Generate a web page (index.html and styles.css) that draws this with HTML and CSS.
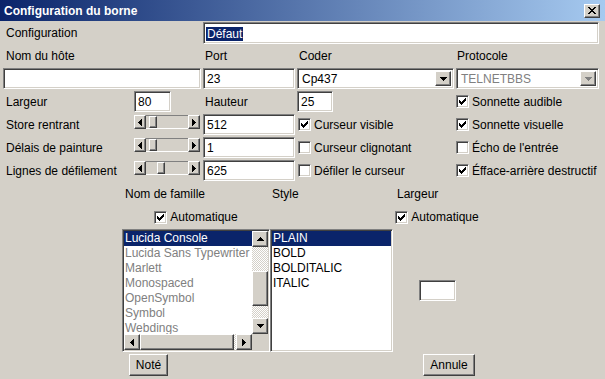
FILE: index.html
```html
<!DOCTYPE html>
<html lang="fr">
<head>
<meta charset="utf-8">
<title>Configuration du borne</title>
<link rel="stylesheet" href="styles.css">
</head>
<body>
<div class="window">
  <div class="titlebar">
    <span class="title">Configuration du borne</span>
    <span class="close raised"><svg width="8" height="7" viewBox="0 0 8 7" shape-rendering="crispEdges"><path d="M0 0h2v1h1v1h2v-1h1v-1h2v1h-1v1h-1v1h-1v1h1v1h1v1h1v1h-2v-1h-1v-1h-2v1h-1v1h-2v-1h1v-1h1v-1h1v-1h-1v-1h-1v-1h-1z"/></svg></span>
  </div>

  <div class="form">
    <div class="lbl c1">Configuration</div>
    <div class="field sunken c35"><span class="hl">Défaut</span></div>

    <div class="lbl c1">Nom du hôte</div>
    <div class="lbl c3">Port</div>
    <div class="lbl c4">Coder</div>
    <div class="lbl c5">Protocole</div>

    <div class="field sunken c12"></div>
    <div class="field sunken c3">23</div>
    <div class="combo sunken c4"><span class="ctext">Cp437</span><span class="cbtn raised"><svg width="7" height="4" viewBox="0 0 7 4" shape-rendering="crispEdges"><path d="M0 0h7v1h-1v1h-1v1h-1v1h-1v-1h-1v-1h-1v-1h-1z"/></svg></span></div>
    <div class="combo sunken c5 disabled"><span class="ctext">TELNETBBS</span><span class="cbtn raised"><svg width="7" height="4" viewBox="0 0 7 4" shape-rendering="crispEdges"><path d="M0 0h7v1h-1v1h-1v1h-1v1h-1v-1h-1v-1h-1v-1h-1z"/></svg></span></div>

    <div class="lbl c1">Largeur</div>
    <div class="field sunken c2 small">80</div>
    <div class="lbl c3">Hauteur</div>
    <div class="field sunken c4 small">25</div>
    <label class="chk c5"><span class="box sunken"><svg width="7" height="7" viewBox="0 0 7 7" shape-rendering="crispEdges"><path d="M6 0h1v3h-1v1h-1v1h-1v1h-1v1h-1v-1h-1v-1h-1v-3h1v1h1v1h1v-1h1v-1h1v-1h1z"/></svg></span>Sonnette audible</label>

    <div class="lbl c1">Store rentrant</div>
    <div class="slider c2"><span class="sbtn raised"><svg width="4" height="7" viewBox="0 0 4 7" shape-rendering="crispEdges"><path d="M3 0h1v7h-1v-1h-1v-1h-1v-1h-1v-1h1v-1h1v-1h1z"/></svg></span><span class="trough"><span class="thumb raised" style="margin-left:3px"></span></span><span class="sbtn raised"><svg width="4" height="7" viewBox="0 0 4 7" shape-rendering="crispEdges"><path d="M0 0h1v1h1v1h1v1h1v1h-1v1h-1v1h-1v1h-1z"/></svg></span></div>
    <div class="field sunken c3">512</div>
    <label class="chk c4"><span class="box sunken"><svg width="7" height="7" viewBox="0 0 7 7" shape-rendering="crispEdges"><path d="M6 0h1v3h-1v1h-1v1h-1v1h-1v1h-1v-1h-1v-1h-1v-3h1v1h1v1h1v-1h1v-1h1v-1h1z"/></svg></span>Curseur visible</label>
    <label class="chk c5"><span class="box sunken"><svg width="7" height="7" viewBox="0 0 7 7" shape-rendering="crispEdges"><path d="M6 0h1v3h-1v1h-1v1h-1v1h-1v1h-1v-1h-1v-1h-1v-3h1v1h1v1h1v-1h1v-1h1v-1h1z"/></svg></span>Sonnette visuelle</label>

    <div class="lbl c1">Délais de painture</div>
    <div class="slider c2"><span class="sbtn raised"><svg width="4" height="7" viewBox="0 0 4 7" shape-rendering="crispEdges"><path d="M3 0h1v7h-1v-1h-1v-1h-1v-1h-1v-1h1v-1h1v-1h1z"/></svg></span><span class="trough"><span class="thumb raised" style="margin-left:3px"></span></span><span class="sbtn raised"><svg width="4" height="7" viewBox="0 0 4 7" shape-rendering="crispEdges"><path d="M0 0h1v1h1v1h1v1h1v1h-1v1h-1v1h-1v1h-1z"/></svg></span></div>
    <div class="field sunken c3">1</div>
    <label class="chk c4"><span class="box sunken"></span>Curseur clignotant</label>
    <label class="chk c5"><span class="box sunken"></span>Écho de l'entrée</label>

    <div class="lbl c1">Lignes de défilement</div>
    <div class="slider c2"><span class="sbtn raised"><svg width="4" height="7" viewBox="0 0 4 7" shape-rendering="crispEdges"><path d="M3 0h1v7h-1v-1h-1v-1h-1v-1h-1v-1h1v-1h1v-1h1z"/></svg></span><span class="trough"><span class="thumb raised" style="margin-left:11px"></span></span><span class="sbtn raised"><svg width="4" height="7" viewBox="0 0 4 7" shape-rendering="crispEdges"><path d="M0 0h1v1h1v1h1v1h1v1h-1v1h-1v1h-1v1h-1z"/></svg></span></div>
    <div class="field sunken c3">625</div>
    <label class="chk c4"><span class="box sunken"></span>Défiler le curseur</label>
    <label class="chk c5"><span class="box sunken"><svg width="7" height="7" viewBox="0 0 7 7" shape-rendering="crispEdges"><path d="M6 0h1v3h-1v1h-1v1h-1v1h-1v1h-1v-1h-1v-1h-1v-3h1v1h1v1h1v-1h1v-1h1v-1h1z"/></svg></span>Éfface-arrière destructif</label>
  </div>

  <div class="lower">
    <div class="lbl">Nom de famille</div>
    <div class="lbl lbl-style">Style</div>
    <div class="lbl lbl-larg">Largeur</div>

    <label class="chk center"><span class="box sunken"><svg width="7" height="7" viewBox="0 0 7 7" shape-rendering="crispEdges"><path d="M6 0h1v3h-1v1h-1v1h-1v1h-1v1h-1v-1h-1v-1h-1v-3h1v1h1v1h1v-1h1v-1h1v-1h1z"/></svg></span>Automatique</label>
    <div></div>
    <label class="chk center"><span class="box sunken"><svg width="7" height="7" viewBox="0 0 7 7" shape-rendering="crispEdges"><path d="M6 0h1v3h-1v1h-1v1h-1v1h-1v1h-1v-1h-1v-1h-1v-3h1v1h1v1h1v-1h1v-1h1v-1h1z"/></svg></span>Automatique</label>

    <div class="listbox fonts sunken">
      <div class="items">
        <div class="it sel">Lucida Console</div>
        <div class="it dis">Lucida Sans Typewriter</div>
        <div class="it dis">Marlett</div>
        <div class="it dis">Monospaced</div>
        <div class="it dis">OpenSymbol</div>
        <div class="it dis">Symbol</div>
        <div class="it dis">Webdings</div>
      </div>
      <div class="vscroll">
        <span class="sbtn raised"><svg width="7" height="4" viewBox="0 0 7 4" shape-rendering="crispEdges"><path d="M3 0h1v1h1v1h1v1h1v1h-7v-1h1v-1h1v-1h1z"/></svg></span>
        <span class="dither"></span>
        <span class="raised"></span>
        <span class="dither"></span>
        <span class="sbtn raised"><svg width="7" height="4" viewBox="0 0 7 4" shape-rendering="crispEdges"><path d="M0 0h7v1h-1v1h-1v1h-1v1h-1v-1h-1v-1h-1v-1h-1z"/></svg></span>
      </div>
      <div class="hscroll">
        <span class="sbtn raised"><svg width="4" height="7" viewBox="0 0 4 7" shape-rendering="crispEdges"><path d="M3 0h1v7h-1v-1h-1v-1h-1v-1h-1v-1h1v-1h1v-1h1z"/></svg></span>
        <span class="raised"></span>
        <span class="dither"></span>
        <span class="sbtn raised"><svg width="4" height="7" viewBox="0 0 4 7" shape-rendering="crispEdges"><path d="M0 0h1v1h1v1h1v1h1v1h-1v1h-1v1h-1v1h-1z"/></svg></span>
      </div>
      <div class="corner"></div>
    </div>

    <div class="listbox styles sunken">
      <div class="it sel">PLAIN</div>
      <div class="it">BOLD</div>
      <div class="it">BOLDITALIC</div>
      <div class="it">ITALIC</div>
    </div>

    <div class="field sunken tiny"></div>

    <button class="btn raised ok">Noté</button>
    <div></div>
    <button class="btn raised cancel">Annule</button>
  </div>
</div>
</body>
</html>
```

FILE: styles.css
```css
* { box-sizing: border-box; }

body {
  margin: 0;
  background: #d4d0c8;
  font-family: "Liberation Sans", Arial, sans-serif;
  font-size: 12px;
  color: #000;
}

.window {
  width: 605px;
  height: 379px;
  overflow: hidden;
}

/* bevels */
.sunken {
  border: 1px solid;
  border-color: #808080 #ffffff #ffffff #808080;
  box-shadow: inset 1px 1px #404040, inset -1px -1px #d4d0c8;
  background: #fff;
}
.raised {
  border: 1px solid;
  border-color: #ffffff #404040 #404040 #ffffff;
  box-shadow: inset -1px -1px #808080;
  background: #d4d0c8;
}

/* title bar */
.titlebar {
  height: 21px;
  background: linear-gradient(to right, #0a246a, #a6caf0);
  display: flex;
  align-items: center;
  justify-content: space-between;
  padding: 0 5px 0 4px;
}
.title {
  color: #fff;
  font-weight: bold;
  font-size: 12px;
}
.close {
  width: 16px;
  height: 14px;
  display: flex;
  align-items: center;
  justify-content: center;
}

/* top form */
.form {
  display: grid;
  grid-template-columns: 129px 67px 92px 157px 143px;
  grid-template-rows: 22px 20px 21px 21px 21px 21px 21px;
  gap: 2px;
  padding: 1px 0 0 3px;
}
.c1 { grid-column: 1; }
.c2 { grid-column: 2; }
.c3 { grid-column: 3; }
.c4 { grid-column: 4; }
.c5 { grid-column: 5; }
.c12 { grid-column: 1 / 3; }
.c35 { grid-column: 3 / 6; }

.lbl {
  display: flex;
  align-items: center;
  padding-left: 3px;
  white-space: nowrap;
}
.form .c3.lbl, .form .c4.lbl { padding-left: 2px; }
.form .c5.lbl { padding-left: 1px; }

.field {
  display: flex;
  align-items: center;
  padding: 1px 2px 0 3px;
  white-space: nowrap;
}
.field.small { width: 37px; }
.form .c4.small { width: 36px; }

.hl {
  background: #0a246a;
  color: #fff;
  padding: 0 1px;
  margin-left: -1px;
}

.combo {
  display: flex;
  padding: 2px;
}
.ctext {
  flex: 1;
  display: flex;
  align-items: center;
  padding-left: 2px;
}
.cbtn {
  width: 16px;
  display: flex;
  align-items: center;
  justify-content: center;
}
.disabled .ctext { color: #808080; }
.disabled .cbtn svg { fill: #808080; }

.chk {
  display: flex;
  align-items: center;
  gap: 3px;
  white-space: nowrap;
}
.form .chk { padding-left: 0; }
.form .c4.chk { padding-left: 1px; }
.box {
  width: 13px;
  height: 13px;
  flex: none;
  display: flex;
  align-items: center;
  justify-content: center;
}

/* sliders */
.slider {
  width: 66px;
  height: 14px;
  margin-top: 1px;
  display: flex;
}
.slider .sbtn {
  width: 12px;
  display: flex;
  align-items: center;
  justify-content: center;
}
.trough {
  flex: 1;
  display: flex;
  border-top: 1px solid #808080;
  border-bottom: 1px solid #ffffff;
}
.thumb {
  width: 8px;
}

/* lower section */
.lower {
  display: grid;
  grid-template-columns: 148px 123px 88px;
  grid-template-rows: 22px 20px 123px 22px;
  row-gap: 2px;
  margin: 2px 0 0 122px;
}
.lower .lbl { padding-left: 3px; }
.lower .lbl-style { padding-left: 2px; }
.lower .lbl-larg { padding-left: 4px; }
.center { justify-self: center; }

.listbox {
  padding: 1px;
  overflow: hidden;
}
.fonts {
  display: grid;
  grid-template-columns: 128px 16px;
  grid-template-rows: 103px 16px;
}
.items { overflow: hidden; }
.it {
  height: 15px;
  line-height: 15px;
  padding-left: 1px;
  white-space: nowrap;
}
.it.sel { background: #0a246a; color: #fff; }
.it.dis { color: #808080; }
.styles .it { padding-left: 1px; }

.vscroll {
  display: grid;
  grid-template-rows: 16px 24px 35px 1fr 16px;
}
.hscroll {
  display: grid;
  grid-template-columns: 16px 94px 1fr 16px;
}
.sbtn {
  display: flex;
  align-items: center;
  justify-content: center;
}
.dither {
  background: repeating-conic-gradient(#d4d0c8 0 25%, #ffffff 0 50%) 0 0 / 2px 2px;
}
.corner { background: #d4d0c8; }

.tiny {
  width: 37px;
  height: 21px;
  align-self: center;
  justify-self: center;
}

.btn {
  font-family: "Liberation Sans", Arial, sans-serif;
  font-size: 12px;
  color: #000;
  height: 22px;
  padding: 0;
}
.ok { width: 39px; margin-left: 7px; }
.cancel { width: 52px; justify-self: end; margin-right: 6px; }
```
